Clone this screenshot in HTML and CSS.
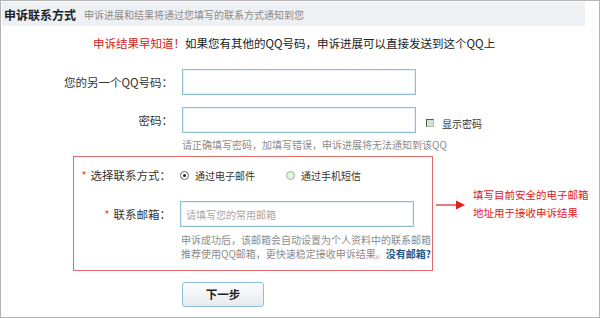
FILE: index.html
```
<!DOCTYPE html>
<html lang="zh-CN">
<head>
    <meta charset="UTF-8">
    <title>申诉联系方式</title>
    <link rel="stylesheet" href="styles.css">
</head>
<body>
    <div class="page">
        <!-- 标题栏 -->
        <div class="head">
            <span class="head-title">申诉联系方式</span>
            <span class="head-sub">申诉进展和结果将通过您填写的联系方式通知到您</span>
        </div>

        <p class="notice"><em>申诉结果早知道！</em>如果您有其他的QQ号码，申诉进展可以直接发送到这个QQ上</p>

        <div class="row row-qq">
            <label class="label">您的另一个QQ号码：</label>
            <input class="field" type="text">
        </div>
        <div class="row row-pwd">
            <label class="label">密码：</label>
            <input class="field" type="password">
            <span class="check"><i class="check-box"></i>显示密码</span>
        </div>
        <p class="hint hint-pwd">请正确填写密码，加填写错误，申诉进展将无法通知到该QQ</p>

        <!-- 联系方式 -->
        <div class="contact-wrap">
            <div class="contact">
                <div class="row">
                    <label class="label"><b class="star">*</b>选择联系方式：</label>
                    <span class="radio on"></span><span class="radio-text">通过电子邮件</span>
                    <span class="radio"></span><span class="radio-text">通过手机短信</span>
                </div>
                <div class="row row-mail">
                    <label class="label"><b class="star">*</b>联系邮箱：</label>
                    <input class="field" type="text" placeholder="请填写您的常用邮箱">
                </div>
                <p class="hint">申诉成功后，该邮箱会自动设置为个人资料中的联系邮箱</p>
                <p class="hint">推荐使用QQ邮箱，更快速稳定接收申诉结果。<a class="no-mail" href="#">没有邮箱?</a></p>
            </div>
            <div class="tip">
                <svg class="tip-arrow" width="30" height="10" viewBox="0 0 30 10">
                    <line x1="0" y1="5" x2="22" y2="5" stroke="#e0201e" stroke-width="1.2"/>
                    <polygon points="20,0.5 29,5 20,9.5" fill="#e0201e"/>
                </svg>
                <div class="tip-text">填写目前安全的电子邮箱<br>地址用于接收申诉结果</div>
            </div>
        </div>

        <div class="actions">
            <button class="btn" type="button">下一步</button>
        </div>
    </div>
</body>
</html>
```

FILE: styles.css
```
/* 全局 */
body {
    margin: 0;
    font-family: "Noto Sans CJK SC", "Liberation Sans", sans-serif;
    color: #222;
    background: #fff;
}

.page {
    width: 600px;
    height: 318px;
    box-sizing: border-box;
    border: 1px solid #b4b4b4;
    overflow: hidden;
}

/* 标题栏 */
.head {
    width: 583px;
    height: 24px;
    margin: 1px 0 0 1px;
    background: #eef1f4;
    display: flex;
    align-items: center;
}

.head-title {
    font-size: 12px;
    font-weight: bold;
    color: #222;
    margin-left: 2px;
}

.head-sub {
    font-size: 10px;
    color: #8a8a8a;
    margin-left: 8px;
}

.notice {
    margin: 9px 0 0;
    padding-left: 92px;
    font-size: 11.5px;
    line-height: 16px;
    color: #222;
}

.notice em {
    font-style: normal;
    color: #d3221d;
}

/* 表单行 */
.row {
    display: flex;
    align-items: center;
}

.label {
    width: 172px;
    margin-right: 9px;
    text-align: right;
    font-size: 11.5px;
    color: #333;
    white-space: nowrap;
}

.row-qq {
    margin-top: 18px;
}

.row-pwd {
    margin-top: 12px;
}

.field {
    width: 234px;
    height: 26px;
    box-sizing: border-box;
    margin: 0;
    padding: 0 5px;
    border: 1px solid #8fc0cf;
    box-shadow: inset 0 0 0 1px #e3f0f4;
    font-family: inherit;
    font-size: 10px;
    outline: none;
}

.field::placeholder {
    color: #a8a8a8;
}

.check {
    display: flex;
    align-items: center;
    margin: 6px 0 0 10px;
    font-size: 10px;
    color: #333;
}

.check-box {
    width: 6px;
    height: 6px;
    border: 1px solid;
    border-color: #555 #b8b8b8 #b8b8b8 #555;
    background: #cfe9c8;
    margin-right: 8px;
}

.hint {
    margin: 0;
    padding-left: 181px;
    font-size: 10px;
    line-height: 14px;
    color: #8c8c8c;
}

.hint-pwd {
    margin-top: 5px;
}

/* 红框区域 */
.contact-wrap {
    display: flex;
    align-items: flex-start;
    margin-top: 4px;
}

.contact {
    width: 360px;
    margin-left: 72px;
    padding: 10px 0 9px;
    box-sizing: border-box;
    border: 1px solid #e26a6a;
}

.contact .label {
    width: 97px;
    margin-right: 9px;
}

.contact .hint {
    padding-left: 107px;
}

.row-mail {
    margin: 18px 0 6px;
}

.star {
    color: #e05050;
    font-weight: normal;
    margin-right: 4px;
}

.radio {
    width: 7px;
    height: 7px;
    border: 1px solid #9ab89a;
    border-radius: 50%;
    background: #e4f2e0;
    margin-right: 6px;
    position: relative;
}

.radio.on {
    border-color: #666;
    background: #fff;
}

.radio.on::after {
    content: "";
    position: absolute;
    left: 2px;
    top: 2px;
    width: 3px;
    height: 3px;
    border-radius: 50%;
    background: #222;
}

.radio-text {
    font-size: 10px;
    color: #333;
    margin-right: 31px;
}

.no-mail {
    color: #1d5b8e;
    font-weight: bold;
    text-decoration: none;
}

/* 右侧说明 */
.tip {
    display: flex;
    align-items: center;
    padding-top: 30px;
}

.tip-arrow {
    margin: 2px 7px 0 3px;
}

.tip-text {
    font-size: 10.5px;
    line-height: 18px;
    color: #e0201e;
}

/* 按钮 */
.actions {
    padding: 9px 0 0 181px;
}

.btn {
    width: 82px;
    height: 25px;
    border: 1px solid #8dbfd6;
    border-radius: 3px;
    background: linear-gradient(#fdfdfd, #e6eaee);
    font-family: inherit;
    font-size: 11.5px;
    font-weight: bold;
    color: #222;
    padding: 0;
}
```
